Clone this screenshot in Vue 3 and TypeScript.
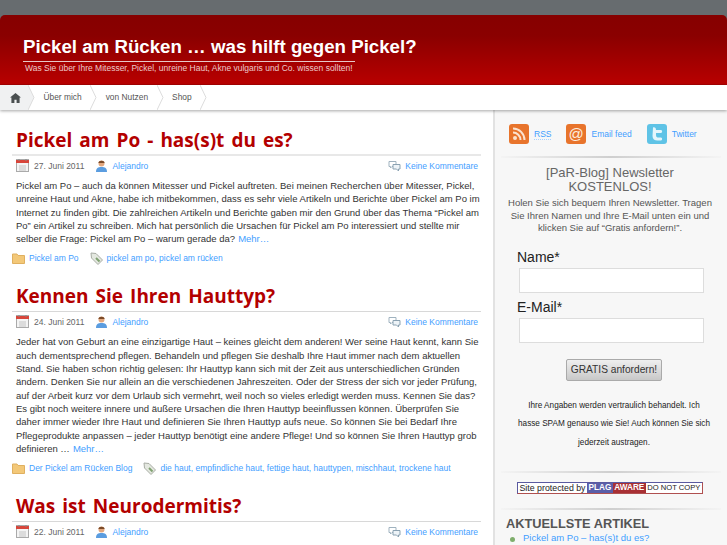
<script setup lang="ts">
interface Post {
  title: string
  date: string
  lines: string[]
  more: string
  category?: string
  tags?: string
}

const posts: Post[] = [
  {
    title: 'Pickel am Po - has(s)t du es?',
    date: '27. Juni 2011',
    lines: [
      'Pickel am Po – auch da können Mitesser und Pickel auftreten. Bei meinen Recherchen über Mitesser, Pickel,',
      'unreine Haut und Akne, habe ich mitbekommen, dass es sehr viele Artikeln und Berichte über Pickel am Po im',
      'Internet zu finden gibt. Die zahlreichen Artikeln und Berichte gaben mir den Grund über das Thema “Pickel am',
      'Po” ein Artikel zu schreiben. Mich hat persönlich die Ursachen für Pickel am Po interessiert und stellte mir',
      'selber die Frage: Pickel am Po – warum gerade da?',
    ],
    more: 'Mehr…',
    category: 'Pickel am Po',
    tags: 'pickel am po, pickel am rücken',
  },
  {
    title: 'Kennen Sie Ihren Hauttyp?',
    date: '24. Juni 2011',
    lines: [
      'Jeder hat von Geburt an eine einzigartige Haut – keines gleicht dem anderen! Wer seine Haut kennt, kann Sie',
      'auch dementsprechend pflegen. Behandeln und pflegen Sie deshalb Ihre Haut immer nach dem aktuellen',
      'Stand. Sie haben schon richtig gelesen: Ihr Hauttyp kann sich mit der Zeit aus unterschiedlichen Gründen',
      'ändern. Denken Sie nur allein an die verschiedenen Jahreszeiten. Oder der Stress der sich vor jeder Prüfung,',
      'auf der Arbeit kurz vor dem Urlaub sich vermehrt, weil noch so vieles erledigt werden muss. Kennen Sie das?',
      'Es gibt noch weitere innere und äußere Ursachen die Ihren Hauttyp beeinflussen können. Überprüfen Sie',
      'daher immer wieder Ihre Haut und definieren Sie Ihren Hauttyp aufs neue. So können Sie bei Bedarf Ihre',
      'Pflegeprodukte anpassen – jeder Hauttyp benötigt eine andere Pflege! Und so können Sie Ihren Hauttyp grob',
      'definieren …',
    ],
    more: 'Mehr…',
    category: 'Der Pickel am Rücken Blog',
    tags: 'die haut, empfindliche haut, fettige haut, hauttypen, mischhaut, trockene haut',
  },
  {
    title: 'Was ist Neurodermitis?',
    date: '22. Juni 2011',
    lines: [],
    more: '',
  },
]

const navItems = ['Über mich', 'von Nutzen', 'Shop']
</script>

<template>
  <div class="page">
    <header class="head">
      <h1 class="site-title">Pickel am Rücken … was hilft gegen Pickel?</h1>
      <p class="tagline">Was Sie über Ihre Mitesser, Pickel, unreine Haut, Akne vulgaris und Co. wissen sollten!</p>
    </header>

    <nav class="nav">
      <a class="nav-item home">
        <svg width="11" height="10" viewBox="0 0 12 11">
          <path d="M6 0 L12 5 L10.5 5 L10.5 11 L7.2 11 L7.2 7.5 L4.8 7.5 L4.8 11 L1.5 11 L1.5 5 L0 5 Z" fill="#4a4f50" />
        </svg>
      </a>
      <svg class="chev" width="7" height="25" viewBox="0 0 7 25">
        <path d="M0 0 L6 12.5 L0 25 Z" fill="#f0f1f2" />
        <path d="M0 0 L6 12.5 L0 25" fill="none" stroke="#dcdcdc" />
      </svg>
      <template v-for="item in navItems" :key="item">
        <a class="nav-item">{{ item }}</a>
        <svg class="chev" width="7" height="25" viewBox="0 0 7 25">
          <path d="M0 0 L6 12.5 L0 25" fill="none" stroke="#dcdcdc" />
        </svg>
      </template>
    </nav>

    <div class="columns">
      <main class="content">
        <article v-for="post in posts" :key="post.title" class="post">
          <h2 class="post-title">{{ post.title }}</h2>
          <div class="meta">
            <svg class="ico" width="13" height="13" viewBox="0 0 13 13">
              <rect x="0.5" y="0.5" width="12" height="12" fill="#f4f4f4" stroke="#aaa" />
              <rect x="0" y="1" width="13" height="3" fill="#d8453a" />
              <path d="M3 0v2M10 0v2" stroke="#888" />
              <path d="M3 7h7M3 9h7M3 11h7" stroke="#c4c4c4" />
            </svg>
            <span class="date">{{ post.date }}</span>
            <svg class="ico user" width="13" height="13" viewBox="0 0 13 13">
              <path d="M1 13 C1 9 3 8 6.5 8 C10 8 12 9 12 13 Z" fill="#5b9de0" />
              <circle cx="6.5" cy="4.5" r="3" fill="#e2a77e" />
              <path d="M3.4 4 C3.5 1 9.5 1 9.6 4 Z" fill="#7a4a28" />
            </svg>
            <a class="link">Alejandro</a>
            <span class="spacer"></span>
            <svg class="ico" width="13" height="12" viewBox="0 0 13 12">
              <path d="M1 1.5 H8 V6.5 H4 L2.5 8 V6.5 H1 Z" fill="#fff" stroke="#9fb2bf" />
              <path d="M5 4.5 H12 V9 H10.5 V11 L8.5 9 H5 Z" fill="#eef4f8" stroke="#8ba2b2" />
            </svg>
            <a class="link comments">Keine Kommentare</a>
          </div>
          <p v-if="post.lines.length" class="excerpt">
            <template v-for="(line, i) in post.lines" :key="i">{{ line }}<br v-if="i < post.lines.length - 1" /></template>
            <a class="link more">{{ post.more }}</a>
          </p>
          <div v-if="post.category" class="foot">
            <svg class="ico" width="13" height="11" viewBox="0 0 13 11">
              <path d="M0.5 1 H5 L6 2.5 H12.5 V10.5 H0.5 Z" fill="#f3c878" stroke="#e0b060" />
            </svg>
            <a class="link">{{ post.category }}</a>
            <svg class="ico tag" width="13" height="13" viewBox="0 0 13 13">
              <path d="M1 1 L6 1.5 L12.5 8 L8 12.5 L1.5 6 Z" fill="#e4e8e0" stroke="#a8aca4" />
              <path d="M6 6 L9.5 9.5" stroke="#7fa070" stroke-width="2" />
            </svg>
            <a class="link">{{ post.tags }}</a>
          </div>
        </article>
      </main>

      <aside class="side">
        <div class="feeds">
          <a class="feed">
            <svg width="20" height="20" viewBox="0 0 20 20">
              <rect width="20" height="20" rx="3" fill="#e8742c" />
              <circle cx="6" cy="14" r="2" fill="#fbe3d0" />
              <path d="M4 8.5 A7.5 7.5 0 0 1 11.5 16 M4 4.5 A11.5 11.5 0 0 1 15.5 16" fill="none" stroke="#fbe3d0" stroke-width="2" />
            </svg>
            <span class="rss">RSS</span>
          </a>
          <a class="feed mail">
            <svg width="20" height="20" viewBox="0 0 20 20">
              <rect width="20" height="20" rx="3" fill="#e8742c" />
              <text x="10" y="15" text-anchor="middle" font-family="Liberation Sans, sans-serif" font-size="15" fill="#fdeede">@</text>
            </svg>
            <span>Email feed</span>
          </a>
          <a class="feed tw">
            <svg width="20" height="20" viewBox="0 0 20 20">
              <rect width="20" height="20" rx="3" fill="#5fc3e6" />
              <path d="M6 3.5 C8 3 9 4 9 6 H14 C15.5 6 15.5 9 14 9 H9 V11 C9 13 10 13.5 11.5 13.5 H14 C15.5 13.5 15.5 16.5 14 16.5 H10.5 C7.5 16.5 5.5 15 5.5 12 Z" fill="#e4f6fc" />
            </svg>
            <span>Twitter</span>
          </a>
        </div>
        <div class="sep"></div>

        <section class="newsletter">
          <h3 class="nl-title">[PaR-Blog] Newsletter<br />KOSTENLOS!</h3>
          <p class="nl-text">Holen Sie sich bequem Ihren Newsletter. Tragen Sie Ihren Namen und Ihre E-Mail unten ein und klicken Sie auf “Gratis anfordern!”.</p>
          <form class="form" @submit.prevent>
            <label class="lbl">Name*</label>
            <input class="inp" type="text" />
            <label class="lbl">E-Mail*</label>
            <input class="inp" type="text" />
            <button class="btn" type="button">GRATIS anfordern!</button>
          </form>
          <p class="privacy">Ihre Angaben werden vertraulich behandelt. Ich<br />hasse SPAM genauso wie Sie! Auch können Sie sich<br />jederzeit austragen.</p>
        </section>
        <div class="sep"></div>

        <div class="plag">
          <div class="plag-box">
            <span class="pl-a">Site protected by</span><span class="pl-b">PLAG</span><span class="pl-c">AWARE</span><span class="pl-d">DO NOT COPY</span>
          </div>
        </div>
        <div class="sep"></div>

        <h3 class="widget-title">AKTUELLSTE ARTIKEL</h3>
        <ul class="recent">
          <li><a class="recent-link">Pickel am Po – has(s)t du es?</a></li>
        </ul>
      </aside>
    </div>
  </div>
</template>

<style>
html,
body {
  margin: 0;
  height: 545px;
  overflow: hidden;
  background: #676c6f;
}
</style>

<style scoped>
.page {
  width: 727px;
  height: 545px;
  overflow: hidden;
  padding-top: 15px;
  box-sizing: border-box;
  font-family: "Liberation Sans", Arial, sans-serif;
  background: #676c6f;
}
.head {
  height: 70px;
  box-sizing: border-box;
  padding: 22px 0 0 23px;
  background: linear-gradient(#860000, #8a0000 30%, #b80000);
  border-radius: 5px 5px 0 0;
  border-bottom: 1px solid #a80000;
}
.site-title {
  margin: 0;
  font-size: 18.7px;
  line-height: 20px;
  font-weight: bold;
  color: #fff;
}
.tagline {
  margin: 4px 0 0;
  width: 330px;
  border-top: 1px solid #e8c8c8;
  padding-left: 2px;
  font-size: 8.5px;
  line-height: 12px;
  color: #eccaca;
  white-space: nowrap;
}
.nav {
  display: flex;
  height: 25px;
  background: #fff;
  box-shadow: 0 1px 3px rgba(0, 0, 0, 0.35);
  position: relative;
  font-size: 8.4px;
  color: #555;
}
.nav-item {
  display: flex;
  align-items: center;
  padding: 0 8.5px;
  line-height: 25px;
  white-space: nowrap;
}
.nav-item.home {
  width: 28px;
  box-sizing: border-box;
  padding: 0 0 0 10px;
  background: #f0f1f2;
  height: 25px;
}
.chev {
  flex: none;
}
.columns {
  display: flex;
  height: 435px;
}
.content {
  width: 493px;
  flex: none;
  background: #fff;
  padding: 2px 12px 0;
  box-sizing: border-box;
}
.post {
  margin-bottom: 17px;
}
.post-title {
  margin: 0;
  padding: 15px 0 0 4px;
  font-family: "Open Sans", sans-serif;
  font-size: 19px;
  word-spacing: 2.1px;
  line-height: 27px;
  font-weight: 700;
  color: #b30000;
  border-bottom: 2px solid #e8e8e8;
}
.post + .post .post-title {
  padding: 0 0 1px 4px;
  border-bottom-width: 1px;
  border-bottom-color: #d8d8d8;
}
.meta {
  display: flex;
  align-items: center;
  height: 19px;
  padding: 0 3px 0 4px;
  font-size: 8.5px;
  color: #666;
}
.ico {
  flex: none;
}
.date {
  margin-left: 5px;
}
.user {
  margin-left: 11px;
  margin-right: 4px;
}
.spacer {
  flex: 1;
}
.comments {
  margin-left: 4px;
}
.link {
  color: #3f9eff;
}
.more {
  margin-left: 3px;
}
.excerpt {
  margin: 4px 0 0;
  padding-left: 4px;
  font-size: 9.5px;
  line-height: 13.3px;
  color: #333;
  white-space: nowrap;
}
.foot {
  display: flex;
  align-items: center;
  margin-top: 5px;
  height: 16px;
  font-size: 8.5px;
  gap: 4px;
}
.tag {
  margin-left: 7px;
}
.side {
  flex: 1;
  background: #f7f7f7;
  border-left: 2px solid #e2e2e2;
}
.feeds {
  display: flex;
  height: 46px;
  align-items: center;
  padding: 2px 0 0 14px;
  box-sizing: border-box;
  font-size: 8.5px;
  color: #3f9eff;
}
.feed {
  display: flex;
  align-items: center;
  gap: 5px;
}
.mail {
  margin-left: 15px;
}
.tw {
  margin-left: 15px;
}
.rss {
  border-bottom: 1px dotted #a8d0ff;
}
.sep {
  height: 2px;
  margin: 0 6px;
  background: linear-gradient(90deg, #f4f4f4, #cfcfcf 50%, #f4f4f4);
}
.newsletter {
  text-align: center;
  padding: 8px 10px 19px 8px;
}
.nl-title {
  margin: 0;
  font-weight: normal;
  font-size: 13px;
  line-height: 13.5px;
  color: #666;
}
.nl-text {
  margin: 4px 0 0;
  font-size: 9.5px;
  line-height: 12.5px;
  color: #555;
}
.form {
  display: flex;
  flex-direction: column;
  text-align: left;
  margin-top: 13px;
}
.lbl {
  font-size: 14px;
  line-height: 18px;
  color: #222;
  margin-left: 14px;
}
.inp {
  width: 185px;
  height: 25px;
  box-sizing: border-box;
  margin: 2px 0 5px 16px;
  background: #fff;
  border: 1px solid #ddd;
  padding: 0;
}
.btn {
  align-self: center;
  margin: 11px 0 0 8px;
  width: 96px;
  height: 22px;
  padding: 0;
  font-family: "Liberation Sans", sans-serif;
  font-size: 10.2px;
  color: #333;
  border: 1px solid #aaa;
  border-radius: 2px;
  background: linear-gradient(#efefef, #c8c8c8);
}
.privacy {
  margin: 16px 0 0 8px;
  font-size: 8.2px;
  line-height: 18.5px;
  color: #222;
}
.plag {
  display: flex;
  align-items: flex-start;
  height: 26px;
  padding: 9px 0 0 22px;
}
.plag-box {
  display: flex;
  align-items: center;
  height: 10px;
  line-height: 10px;
  font-size: 8.8px;
  background: #fff;
  border: 1px solid;
  border-color: #5a5aa0 #b05050 #b05050 #5a5aa0;
  white-space: nowrap;
}
.pl-a {
  padding: 0 1.5px;
  color: #222;
}
.pl-d {
  padding: 0 1.5px;
  font-size: 7.6px;
  color: #222;
}
.pl-b,
.pl-c {
  color: #fff;
  font-weight: bold;
  font-size: 8.2px;
  padding: 0 1.5px;
}
.pl-b {
  background: #5a5ea8;
}
.pl-c {
  background: #a83034;
}
.widget-title {
  margin: 7px 0 0 11px;
  font-size: 12.8px;
  line-height: 14px;
  color: #555;
}
.recent {
  margin: 1px 0 0;
  padding: 0 0 0 28px;
  list-style: none;
  font-size: 9.5px;
}
.recent li {
  position: relative;
}
.recent li::before {
  content: "";
  position: absolute;
  left: -13px;
  top: 5px;
  width: 5px;
  height: 5px;
  border-radius: 50%;
  background: #7fae6c;
}
.recent-link {
  color: #3f9eff;
}
</style>
